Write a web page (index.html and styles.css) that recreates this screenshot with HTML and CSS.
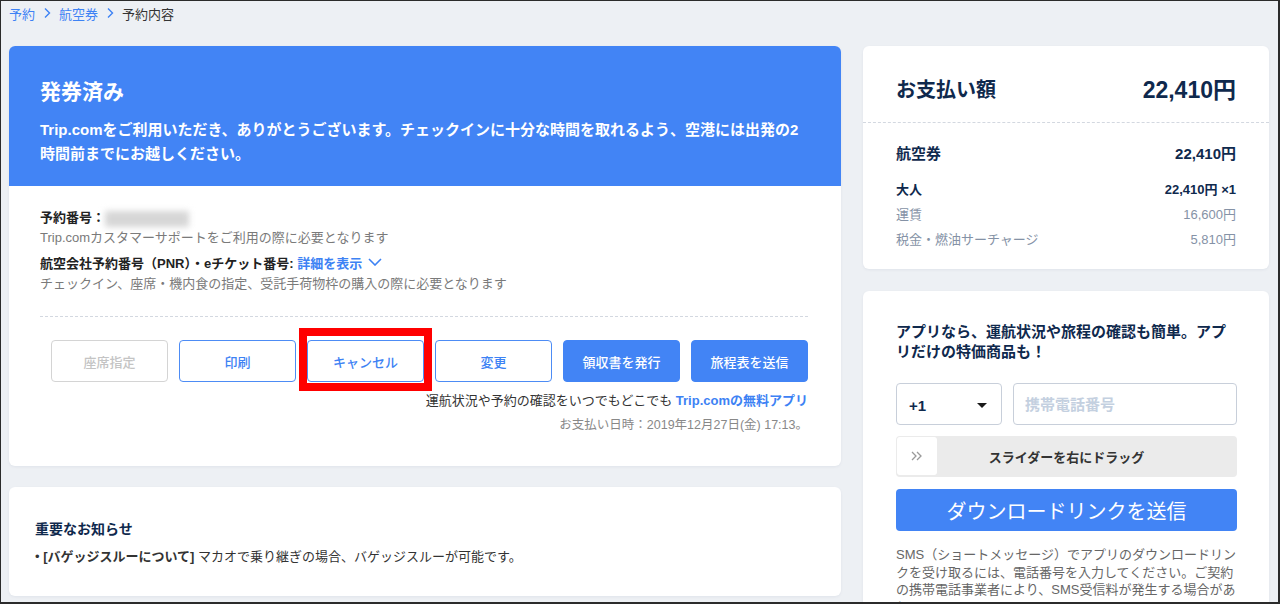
FILE: index.html
```html
<!DOCTYPE html>
<html lang="ja">
<head>
    <meta charset="UTF-8">
    <meta name="viewport" content="width=device-width, initial-scale=1.0">
    <title>予約内容 | Trip.com</title>
    <link rel="stylesheet" href="styles.css">
</head>
<body>
    <div class="frame">
        <nav class="crumbs">
            <a href="#">予約</a>
            <svg class="crumb-sep" viewBox="0 0 8 12"><polyline points="2,1.5 6.5,6 2,10.5"/></svg>
            <a href="#">航空券</a>
            <svg class="crumb-sep" viewBox="0 0 8 12"><polyline points="2,1.5 6.5,6 2,10.5"/></svg>
            <span class="current">予約内容</span>
        </nav>

        <div class="layout">
            <div class="main-col">
                <section class="card status">
                    <div class="status-head">
                        <h1>発券済み</h1>
                        <p>Trip.comをご利用いただき、ありがとうございます。チェックインに十分な時間を取れるよう、空港には出発の2時間前までにお越しください。</p>
                    </div>
                    <div class="status-body">
                        <div class="ref">
                            <p class="ref-label">予約番号：<span class="masked"></span></p>
                            <p class="ref-hint">Trip.comカスタマーサポートをご利用の際に必要となります</p>
                        </div>
                        <div class="ref">
                            <p class="ref-label">航空会社予約番号（PNR）・eチケット番号: <a class="more" href="#">詳細を表示<svg viewBox="0 0 14 8"><polyline points="1,1 7,7 13,1"/></svg></a></p>
                            <p class="ref-hint">チェックイン、座席・機内食の指定、受託手荷物枠の購入の際に必要となります</p>
                        </div>
                        <div class="actions">
                            <button class="btn btn-disabled" disabled>座席指定</button>
                            <button class="btn btn-outline">印刷</button>
                            <button class="btn btn-outline is-marked">キャンセル</button>
                            <button class="btn btn-outline">変更</button>
                            <button class="btn btn-primary">領収書を発行</button>
                            <button class="btn btn-primary">旅程表を送信</button>
                        </div>
                        <p class="app-note">運航状況や予約の確認をいつでもどこでも <a href="#">Trip.comの無料アプリ</a></p>
                        <p class="paid-at">お支払い日時：2019年12月27日(金) 17:13。</p>
                    </div>
                </section>

                <section class="card notice">
                    <h2>重要なお知らせ</h2>
                    <ul>
                        <li><strong>[バゲッジスルーについて]</strong> マカオで乗り継ぎの場合、バゲッジスルーが可能です。</li>
                    </ul>
                </section>
            </div>

            <aside class="side-col">
                <section class="card fare">
                    <div class="fare-head">
                        <h2>お支払い額</h2>
                        <span class="fare-total">22,410円</span>
                    </div>
                    <div class="fare-body">
                        <div class="fare-row fare-main"><span>航空券</span><span>22,410円</span></div>
                        <div class="fare-row fare-sub"><span>大人</span><span>22,410円 ×1</span></div>
                        <div class="fare-row fare-item"><span>運賃</span><span>16,600円</span></div>
                        <div class="fare-row fare-item"><span>税金・燃油サーチャージ</span><span>5,810円</span></div>
                    </div>
                </section>

                <section class="card app">
                    <h3>アプリなら、運航状況や旅程の確認も簡単。アプリだけの特価商品も！</h3>
                    <div class="phone">
                        <div class="country"><span>+1</span><span class="caret"></span></div>
                        <input class="phone-input" type="text" placeholder="携帯電話番号">
                    </div>
                    <div class="slider">
                        <span class="slider-handle">
                            <svg viewBox="0 0 12 10"><polyline points="1,1 5,5 1,9"/><polyline points="6,1 10,5 6,9"/></svg>
                        </span>
                        <span class="slider-text">スライダーを右にドラッグ</span>
                    </div>
                    <button class="btn-send">ダウンロードリンクを送信</button>
                    <p class="sms-note">SMS（ショートメッセージ）でアプリのダウンロードリンクを受け取るには、電話番号を入力してください。ご契約の携帯電話事業者により、SMS受信料が発生する場合があります。</p>
                </section>
            </aside>
        </div>
    </div>
</body>
</html>
```

FILE: styles.css
```css
body {
    margin: 0;
    font-family: "Liberation Sans", "Noto Sans CJK JP", sans-serif;
    color: #222;
}
.frame {
    width: 1280px;
    height: 604px;
    box-sizing: border-box;
    border: solid #2b2b2b;
    border-width: 1px 2px 2px 1px;
    background: #edf0f4;
    overflow: hidden;
    padding: 3px 9px 0 8px;
}
p {
    margin: 0;
}

/* breadcrumb */
.crumbs {
    display: flex;
    align-items: center;
    gap: 8px;
    height: 18px;
    font-size: 13px;
}
.crumbs a {
    color: #3d82f4;
    text-decoration: none;
}
.crumbs .current {
    color: #333;
}
.crumb-sep {
    width: 8px;
    height: 12px;
    fill: none;
    stroke: #3d82f4;
    stroke-width: 1.4;
}

.layout {
    display: grid;
    grid-template-columns: 832px 406px;
    column-gap: 22px;
    align-items: start;
    margin-top: 24px;
}
.main-col,
.side-col {
    display: flex;
    flex-direction: column;
}
.main-col {
    gap: 21px;
}
.side-col {
    gap: 22px;
}
.card {
    background: #fff;
    border-radius: 6px;
    box-shadow: 0 1px 3px rgba(15, 41, 77, 0.06);
}

/* status card */
.status-head {
    background: #4284f5;
    color: #fff;
    border-radius: 6px 6px 0 0;
    padding: 32px 35px 20px 31px;
}
.status-head h1 {
    margin: 0;
    font-size: 21px;
    line-height: 28px;
    font-weight: 700;
}
.status-head p {
    margin-top: 12px;
    font-size: 15px;
    line-height: 24px;
    font-weight: 700;
}
.status-body {
    padding: 22px 33px 31px 31px;
}
.ref + .ref {
    margin-top: 6px;
}
.ref-label {
    font-size: 13px;
    line-height: 20px;
    font-weight: 700;
    color: #222;
}
.masked {
    display: inline-block;
    width: 84px;
    height: 16px;
    background: #d6d6d6;
    filter: blur(3px);
    vertical-align: middle;
}
.ref-hint {
    font-size: 13px;
    line-height: 20px;
    color: #7a7a7a;
}
.more {
    color: #3d82f4;
    text-decoration: none;
}
.more svg {
    width: 14px;
    height: 8px;
    margin-left: 6px;
    vertical-align: 2px;
    fill: none;
    stroke: #3d82f4;
    stroke-width: 1.6;
}

.actions {
    display: flex;
    justify-content: flex-end;
    gap: 11px;
    margin-top: 22px;
    padding-top: 23px;
    border-top: 1px dashed #d3d8e0;
}
.btn {
    position: relative;
    width: 117px;
    height: 42px;
    padding: 0;
    border: 1px solid;
    border-radius: 4px;
    background: #fff;
    font-family: inherit;
    font-size: 13px;
    font-weight: 500;
    cursor: pointer;
}
.btn-disabled {
    border-color: #d4d4d4;
    color: #c4c4c4;
    cursor: default;
}
.btn-outline {
    border-color: #4d8cf5;
    color: #3d82f4;
}
.btn-primary {
    background: #4284f5;
    border-color: #4284f5;
    color: #fff;
}
.is-marked::after {
    content: "";
    position: absolute;
    top: -13px;
    bottom: -10px;
    left: -9px;
    right: -9px;
    border: 8px solid #f00;
    pointer-events: none;
}
.app-note {
    margin-top: 9px;
    text-align: right;
    font-size: 13px;
    line-height: 20px;
    color: #333;
}
.app-note a {
    color: #3d82f4;
    font-weight: 700;
    text-decoration: none;
}
.paid-at {
    margin-top: 4px;
    text-align: right;
    font-size: 12.5px;
    line-height: 20px;
    color: #888;
}

/* notice */
.notice {
    padding: 32px 26px 29px;
}
.notice h2 {
    margin: 0;
    font-size: 14px;
    line-height: 20px;
    color: #0f294d;
}
.notice ul {
    margin: 8px 0 0;
    padding: 0;
    list-style: none;
}
.notice li {
    font-size: 13px;
    line-height: 20px;
    color: #333;
}
.notice li::before {
    content: "• ";
}

/* fare summary */
.fare-head {
    display: flex;
    justify-content: space-between;
    align-items: center;
    height: 28px;
    padding: 30px 33px 18px;
    border-bottom: 1px dashed #d3d8e0;
}
.fare-head h2 {
    margin: 0;
    font-size: 20px;
    line-height: 28px;
    color: #0f294d;
}
.fare-total {
    font-size: 23px;
    line-height: 28px;
    font-weight: 700;
    color: #0f294d;
}
.fare-body {
    padding: 18px 33px 17px;
}
.fare-row {
    display: flex;
    justify-content: space-between;
    height: 25px;
    align-items: center;
    font-size: 13px;
    line-height: 25px;
    color: #0f294d;
}
.fare-main {
    font-size: 15px;
    font-weight: 700;
    margin-bottom: 11px;
}
.fare-sub {
    font-weight: 700;
}
.fare-item {
    color: #8592a6;
}

/* app download */
.app {
    padding: 31px 32px 20px 33px;
}
.app h3 {
    margin: 0;
    font-size: 15px;
    line-height: 20px;
    color: #0f294d;
}
.phone {
    display: flex;
    gap: 11px;
    margin-top: 21px;
}
.country {
    display: flex;
    align-items: center;
    justify-content: space-between;
    box-sizing: border-box;
    width: 106px;
    height: 42px;
    padding: 3px 14px 0 12px;
    border: 1px solid #c8cfda;
    border-radius: 4px;
    font-size: 15px;
    font-weight: 700;
    color: #0f294d;
}
.caret {
    width: 0;
    height: 0;
    border-left: 5px solid transparent;
    border-right: 5px solid transparent;
    border-top: 5px solid #1a1a1a;
}
.phone-input {
    flex: 1;
    min-width: 0;
    box-sizing: border-box;
    height: 42px;
    padding: 0 11px;
    border: 1px solid #c8cfda;
    border-radius: 4px;
    font-family: inherit;
    font-size: 15px;
    font-weight: 700;
}
.phone-input::placeholder {
    color: #c4d0e0;
}
.slider {
    display: flex;
    align-items: stretch;
    height: 41px;
    margin-top: 11px;
    background: #ebebeb;
    border-radius: 4px;
}
.slider-handle {
    display: flex;
    align-items: center;
    justify-content: center;
    width: 40px;
    margin: 1px 0 2px 1px;
    background: #fff;
    border-radius: 3px;
}
.slider-handle svg {
    width: 12px;
    height: 10px;
    fill: none;
    stroke: #9a9a9a;
    stroke-width: 1.3;
}
.slider-text {
    flex: 1;
    display: flex;
    align-items: center;
    justify-content: center;
    padding-right: 41px;
    font-size: 13px;
    font-weight: 700;
    color: #333;
}
.btn-send {
    display: block;
    width: 100%;
    height: 42px;
    margin-top: 12px;
    border: none;
    border-radius: 4px;
    background: #4284f5;
    color: #fff;
    font-family: inherit;
    font-size: 20px;
    cursor: pointer;
}
.sms-note {
    margin-top: 15px;
    font-size: 13px;
    line-height: 17.5px;
    color: #666;
}
```
